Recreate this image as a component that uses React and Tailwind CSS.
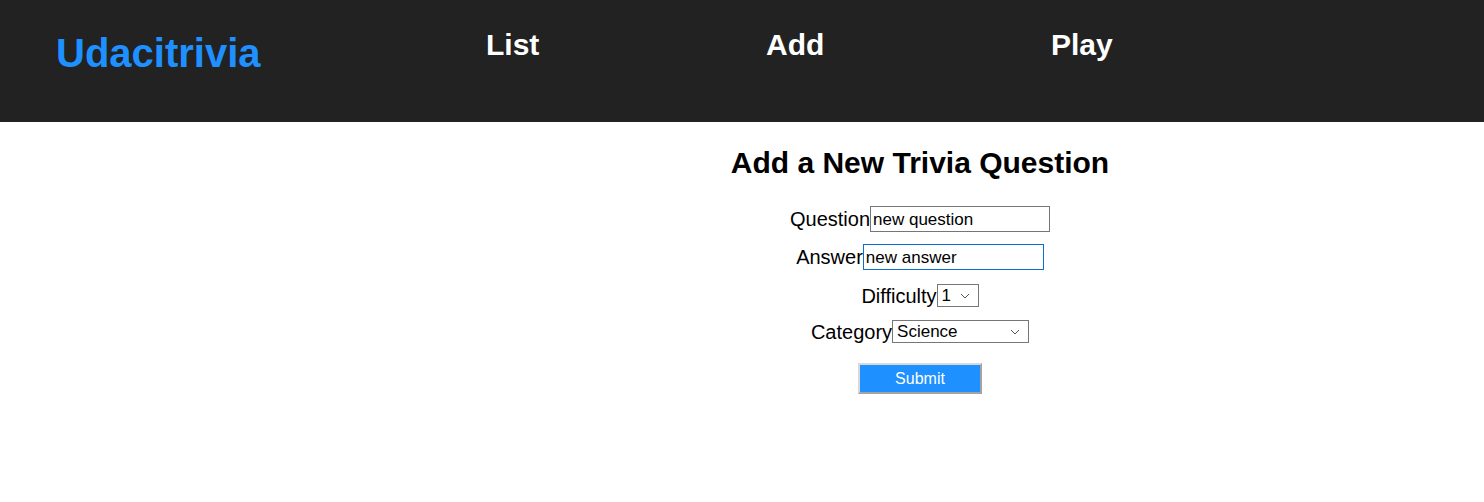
import { useState } from 'react';

const NAV = [
  { name: 'List', w: 'w-[280px]' },
  { name: 'Add', w: 'w-[285px]' },
  { name: 'Play', w: 'w-[120px]' },
];

function Chevron() {
  return (
    <svg width="10" height="6" viewBox="0 0 10 6" className="pointer-events-none absolute right-[9px] top-1/2 -translate-y-1/2">
      <path d="M1 1l4 4 4-4" fill="none" stroke="#555" strokeWidth="1" />
    </svg>
  );
}

function Field({ label, children, className = '' }) {
  return (
    <div className={`flex items-center justify-center ${className}`}>
      <label className="text-[20px] leading-[23px] text-black">{label}</label>
      {children}
    </div>
  );
}

export default function App() {
  const [question, setQuestion] = useState('new question');
  const [answer, setAnswer] = useState('new answer');
  const [difficulty, setDifficulty] = useState('1');
  const [category, setCategory] = useState('Science');

  return (
    <div className="min-h-[502px] bg-white font-['Liberation_Sans',Arial,sans-serif]">

      {/* Header */}
      <header className="flex items-start h-[122px] bg-[#222222] text-white">
        <div className="w-[486px] pl-[56px] pt-[30px]">
          <h1 className="text-[40px] leading-[46px] font-bold text-[#1e90ff]">Udacitrivia</h1>
        </div>
        {NAV.map(n => (
          <div key={n.name} className={`pt-[28px] ${n.w}`}>
            <h2 className="text-[30px] leading-[34px] font-bold cursor-pointer">{n.name}</h2>
          </div>
        ))}
      </header>

      {/* Form */}
      <main className="pl-[356px] flex flex-col items-center">
        <h2 className="mt-[24px] text-[30px] leading-[34px] font-bold text-black">Add a New Trivia Question</h2>

        <form onSubmit={e => e.preventDefault()} className="flex flex-col items-center">
          <Field label="Question" className="mt-[26px]">
            <input value={question} onChange={e => setQuestion(e.target.value)}
              className="w-[180px] h-[26px] border border-[#767676] px-[2px] pt-[2px] text-[17px] text-black outline-none" />
          </Field>

          <Field label="Answer" className="mt-[12px]">
            <input autoFocus value={answer} onChange={e => setAnswer(e.target.value)}
              className="w-[181px] h-[26px] border border-[#0a6fd0] px-[2px] pt-[2px] text-[17px] text-black outline-none focus:outline-none" />
          </Field>

          <Field label="Difficulty" className="mt-[14px]">
            <div className="relative">
              <select value={difficulty} onChange={e => setDifficulty(e.target.value)}
                className="appearance-none w-[42px] h-[23px] border border-[#767676] pl-[4px] pt-[1px] text-[17px] leading-[20px] text-black bg-white outline-none">
                {[1, 2, 3, 4, 5].map(d => <option key={d} value={d}>{d}</option>)}
              </select>
              <Chevron />
            </div>
          </Field>

          <Field label="Category" className="mt-[12px]">
            <div className="relative">
              <select value={category} onChange={e => setCategory(e.target.value)}
                className="appearance-none w-[137px] h-[23px] border border-[#767676] pl-[4px] pt-[1px] text-[17px] leading-[20px] text-black bg-white outline-none">
                {['Science', 'Art', 'Geography', 'History', 'Entertainment', 'Sports'].map(c => <option key={c} value={c}>{c}</option>)}
              </select>
              <Chevron />
            </div>
          </Field>

          <button type="submit"
            className="mt-[19px] w-[124px] h-[31px] bg-[#1e90ff] text-white text-[16px] border-2 border-t-[#d9d9d9] border-l-[#d9d9d9] border-r-[#a3a3a3] border-b-[#a3a3a3]">
            Submit
          </button>
        </form>
      </main>
    </div>
  );
}
